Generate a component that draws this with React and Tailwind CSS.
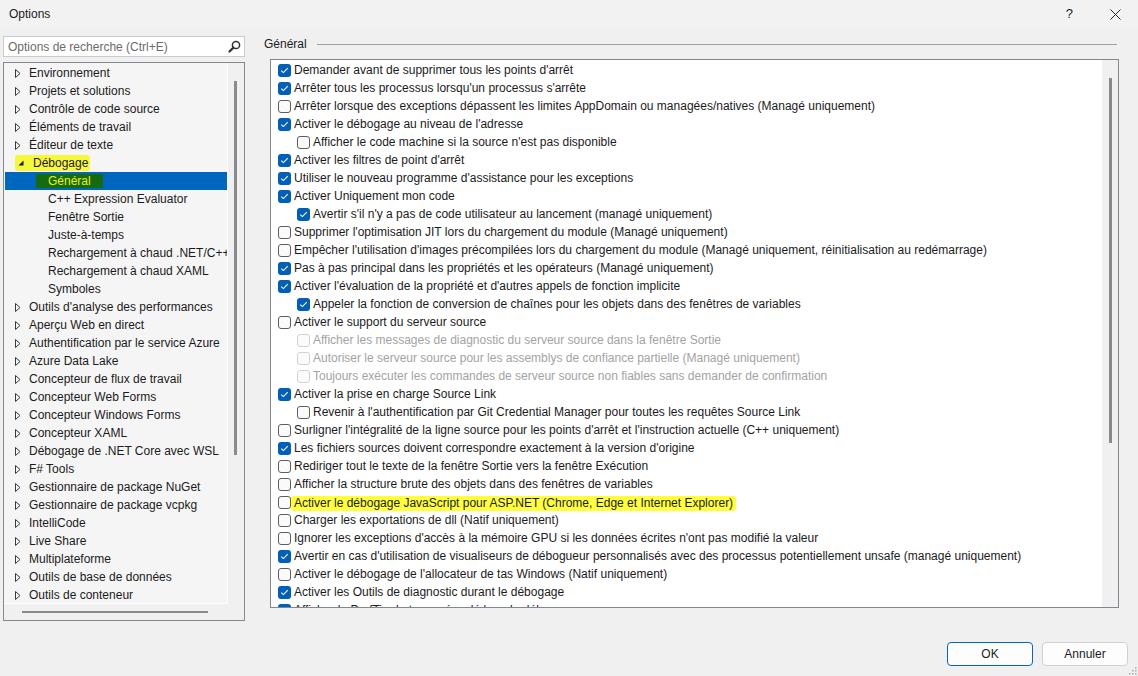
import React from 'react';

const treeItems = [
  { label: 'Environnement', kind: 'closed' },
  { label: 'Projets et solutions', kind: 'closed' },
  { label: 'Contrôle de code source', kind: 'closed' },
  { label: 'Éléments de travail', kind: 'closed' },
  { label: 'Éditeur de texte', kind: 'closed' },
  { label: 'Débogage', kind: 'open' },
  { label: 'Général', kind: 'child', selected: true },
  { label: 'C++ Expression Evaluator', kind: 'child' },
  { label: 'Fenêtre Sortie', kind: 'child' },
  { label: 'Juste-à-temps', kind: 'child' },
  { label: 'Rechargement à chaud .NET/C++', kind: 'child' },
  { label: 'Rechargement à chaud XAML', kind: 'child' },
  { label: 'Symboles', kind: 'child' },
  { label: "Outils d'analyse des performances", kind: 'closed' },
  { label: 'Aperçu Web en direct', kind: 'closed' },
  { label: 'Authentification par le service Azure', kind: 'closed' },
  { label: 'Azure Data Lake', kind: 'closed' },
  { label: 'Concepteur de flux de travail', kind: 'closed' },
  { label: 'Concepteur Web Forms', kind: 'closed' },
  { label: 'Concepteur Windows Forms', kind: 'closed' },
  { label: 'Concepteur XAML', kind: 'closed' },
  { label: 'Débogage de .NET Core avec WSL', kind: 'closed' },
  { label: 'F# Tools', kind: 'closed' },
  { label: 'Gestionnaire de package NuGet', kind: 'closed' },
  { label: 'Gestionnaire de package vcpkg', kind: 'closed' },
  { label: 'IntelliCode', kind: 'closed' },
  { label: 'Live Share', kind: 'closed' },
  { label: 'Multiplateforme', kind: 'closed' },
  { label: 'Outils de base de données', kind: 'closed' },
  { label: 'Outils de conteneur', kind: 'closed' },
];

// state: on / off / dis ; sub = indented
const options = [
  ["Demander avant de supprimer tous les points d'arrêt", 'on'],
  ["Arrêter tous les processus lorsqu'un processus s'arrête", 'on'],
  ['Arrêter lorsque des exceptions dépassent les limites AppDomain ou managées/natives (Managé uniquement)', 'off'],
  ["Activer le débogage au niveau de l'adresse", 'on'],
  ["Afficher le code machine si la source n'est pas disponible", 'off', true],
  ["Activer les filtres de point d'arrêt", 'on'],
  ["Utiliser le nouveau programme d'assistance pour les exceptions", 'on'],
  ['Activer Uniquement mon code', 'on'],
  ["Avertir s'il n'y a pas de code utilisateur au lancement (managé uniquement)", 'on', true],
  ["Supprimer l'optimisation JIT lors du chargement du module (Managé uniquement)", 'off'],
  ["Empêcher l'utilisation d'images précompilées lors du chargement du module (Managé uniquement, réinitialisation au redémarrage)", 'off'],
  ['Pas à pas principal dans les propriétés et les opérateurs (Managé uniquement)', 'on'],
  ["Activer l'évaluation de la propriété et d'autres appels de fonction implicite", 'on'],
  ['Appeler la fonction de conversion de chaînes pour les objets dans des fenêtres de variables', 'on', true],
  ['Activer le support du serveur source', 'off'],
  ['Afficher les messages de diagnostic du serveur source dans la fenêtre Sortie', 'dis', true],
  ['Autoriser le serveur source pour les assemblys de confiance partielle (Managé uniquement)', 'dis', true],
  ['Toujours exécuter les commandes de serveur source non fiables sans demander de confirmation', 'dis', true],
  ['Activer la prise en charge Source Link', 'on'],
  ["Revenir à l'authentification par Git Credential Manager pour toutes les requêtes Source Link", 'off', true],
  ["Surligner l'intégralité de la ligne source pour les points d'arrêt et l'instruction actuelle (C++ uniquement)", 'off'],
  ["Les fichiers sources doivent correspondre exactement à la version d'origine", 'on'],
  ['Rediriger tout le texte de la fenêtre Sortie vers la fenêtre Exécution', 'off'],
  ['Afficher la structure brute des objets dans des fenêtres de variables', 'off'],
  ['Activer le débogage JavaScript pour ASP.NET (Chrome, Edge et Internet Explorer)', 'off', false, true],
  ['Charger les exportations de dll (Natif uniquement)', 'off'],
  ["Ignorer les exceptions d'accès à la mémoire GPU si les données écrites n'ont pas modifié la valeur", 'off'],
  ["Avertir en cas d'utilisation de visualiseurs de débogueur personnalisés avec des processus potentiellement unsafe (managé uniquement)", 'on'],
  ["Activer le débogage de l'allocateur de tas Windows (Natif uniquement)", 'off'],
  ['Activer les Outils de diagnostic durant le débogage', 'on'],
  ['Afficher le PerfTip du temps écoulé lors du débogage', 'on'],
];

const Check = ({ state }) => {
  if (state === 'on') {
    return (
      <span className="w-[13px] h-[13px] shrink-0 rounded-[3px] bg-[#005fb8] flex items-center justify-center">
        <svg width="9" height="7" viewBox="0 0 9 7">
          <path d="M1.2 3.6 L3.4 5.6 L7.8 1.2" stroke="#fff" strokeWidth="1.1" fill="none" />
        </svg>
      </span>
    );
  }
  if (state === 'dis') {
    return <span className="w-[13px] h-[13px] shrink-0 rounded-[3px] border border-[#d2d2d2] bg-[#fbfbfb]" />;
  }
  return <span className="w-[13px] h-[13px] shrink-0 rounded-[3px] border border-[#5e5e5e] bg-[#fafafa]" />;
};

const Arrow = ({ open }) =>
  open ? (
    <svg width="6" height="6" viewBox="0 0 6 6">
      <path d="M5.5 0.5 L5.5 5.5 L0.5 5.5 Z" fill="#1a1a1a" />
    </svg>
  ) : (
    <svg width="6" height="9" viewBox="0 0 6 9">
      <path d="M0.5 0.5 L5 4.5 L0.5 8.5 Z" fill="none" stroke="#3a3a3a" strokeWidth="1" />
    </svg>
  );

const TreeRow = ({ item }) => {
  if (item.kind === 'child') {
    return (
      <div className={`h-[18px] ml-[1px] flex items-center pl-[31px] whitespace-nowrap ${item.selected ? 'bg-[#0067c0]' : ''}`}>
        {item.selected ? (
          <span className="bg-[#146b10] text-[#eef200] px-[12px] leading-[14px]">{item.label}</span>
        ) : (
          <span className="pl-[12px]">{item.label}</span>
        )}
      </div>
    );
  }
  if (item.kind === 'open') {
    return (
      <div className="h-[18px] flex items-center pl-[11px] whitespace-nowrap">
        <span className="flex items-center bg-[#f8f83a] rounded-[3px] pl-[3px] pr-[2px] h-[16px]">
          <span className="w-[15px] flex items-center">
            <Arrow open />
          </span>
          {item.label}
        </span>
      </div>
    );
  }
  return (
    <div className="h-[18px] flex items-center pl-[11px] whitespace-nowrap">
      <span className="w-[14px] flex items-center">
        <Arrow />
      </span>
      {item.label}
    </div>
  );
};

const OptionRow = ({ text, state, sub, mark }) => (
  <div className={`h-[18px] flex items-center gap-[3px] whitespace-nowrap ${sub ? 'pl-[26px]' : 'pl-[7px]'}`}>
    <Check state={state} />
    {mark ? (
      <span className="bg-[#ffff3c] rounded-[3px] -ml-[3px] pl-[3px] pr-[3px] leading-[15px] mt-[2px]">{text}</span>
    ) : (
      <span className={state === 'dis' ? 'text-[#a3a3a3]' : ''}>{text}</span>
    )}
  </div>
);

export default function App() {
  return (
    <div className="relative w-[1138px] h-[676px] bg-[#f0f0f0] flex flex-col text-[12px] text-[#1b1b1b] font-['Liberation_Sans',Arial,sans-serif] overflow-hidden">
      {/* Title bar */}
      <div className="h-[28px] flex items-center pl-[9px] bg-[#f2f2f3]">
        <span>Options</span>
        <div className="ml-auto flex items-center">
          <span className="text-[13px] mr-[37px]">?</span>
          <svg width="11" height="11" viewBox="0 0 11 11" className="mr-[17px]">
            <path d="M0.5 0.5 L10.5 10.5 M10.5 0.5 L0.5 10.5" stroke="#222" strokeWidth="1" />
          </svg>
        </div>
      </div>

      <div className="flex h-[593px]">
        {/* Left column */}
        <div className="ml-[3px] w-[242px] flex flex-col">
          <div className="mt-[8px] h-[21px] border border-[#cacaca] bg-white flex items-center pl-[4px] pr-[3px]">
            <span className="text-[#6b6b6b]">Options de recherche (Ctrl+E)</span>
            <svg width="13" height="13" viewBox="0 0 13 13" className="ml-auto">
              <circle cx="8" cy="5" r="3.6" stroke="#333" strokeWidth="1.5" fill="none" />
              <path d="M5.4 7.6 L1.5 11.5" stroke="#333" strokeWidth="2.2" strokeLinecap="round" />
            </svg>
          </div>
          <div className="mt-[5px] h-[559px] border border-[#828790] bg-[#f0f0f0] flex flex-col">
            <div className="flex h-[541px]">
              <div className="w-[224px] pt-[1px] bg-[#f5f5f5] border-r border-b border-white overflow-hidden">
                {treeItems.map((item) => (
                  <TreeRow key={item.label} item={item} />
                ))}
              </div>
              <div className="w-[16px] pt-[18px]">
                <div className="ml-[6px] w-[3px] h-[374px] bg-[#8a8a8a]" />
              </div>
            </div>
            <div className="h-[16px] flex items-center pl-[18px]">
              <div className="w-[186px] h-[2px] bg-[#8a8a8a]" />
            </div>
          </div>
        </div>

        {/* Right column */}
        <div className="ml-[19px] w-[855px] flex flex-col">
          <div className="mt-[8px] h-[16px] flex items-center">
            <span>Général</span>
            <div className="flex-1 ml-[10px] mr-[2px] h-px bg-[#a0a0a0]" />
          </div>
          <div className="mt-[7px] ml-[6px] w-[849px] h-[549px] border border-[#828790] bg-white flex overflow-hidden">
            <div className="flex-1 pt-[1px] overflow-hidden">
              {options.map(([text, state, sub, mark]) => (
                <OptionRow key={text} text={text} state={state} sub={sub} mark={mark} />
              ))}
            </div>
            <div className="w-[16px] bg-[#f0f0f0] pt-[18px]">
              <div className="ml-[7px] w-[3px] h-[365px] bg-[#8a8a8a]" />
            </div>
          </div>
        </div>
      </div>

      {/* Buttons */}
      <div className="flex justify-end gap-[9px] pr-[10px] pt-[21px]">
        <button className="w-[86px] h-[24px] rounded-[4px] border border-[#0067c0] bg-[#fdfdfd] text-[#1b1b1b] text-[12px]">
          OK
        </button>
        <button className="w-[86px] h-[24px] rounded-[4px] border border-[#d0d0d0] bg-[#fdfdfd] text-[#1b1b1b] text-[12px]">
          Annuler
        </button>
      </div>

      {/* size grip */}
      <svg width="8" height="8" viewBox="0 0 8 8" className="absolute right-[1px] bottom-[1px]">
        <rect x="6" y="0" width="1.5" height="1.5" fill="#a9a9a9" />
        <rect x="3" y="3" width="1.5" height="1.5" fill="#a9a9a9" />
        <rect x="6" y="3" width="1.5" height="1.5" fill="#a9a9a9" />
        <rect x="0" y="6" width="1.5" height="1.5" fill="#a9a9a9" />
        <rect x="3" y="6" width="1.5" height="1.5" fill="#a9a9a9" />
        <rect x="6" y="6" width="1.5" height="1.5" fill="#a9a9a9" />
      </svg>
    </div>
  );
}
